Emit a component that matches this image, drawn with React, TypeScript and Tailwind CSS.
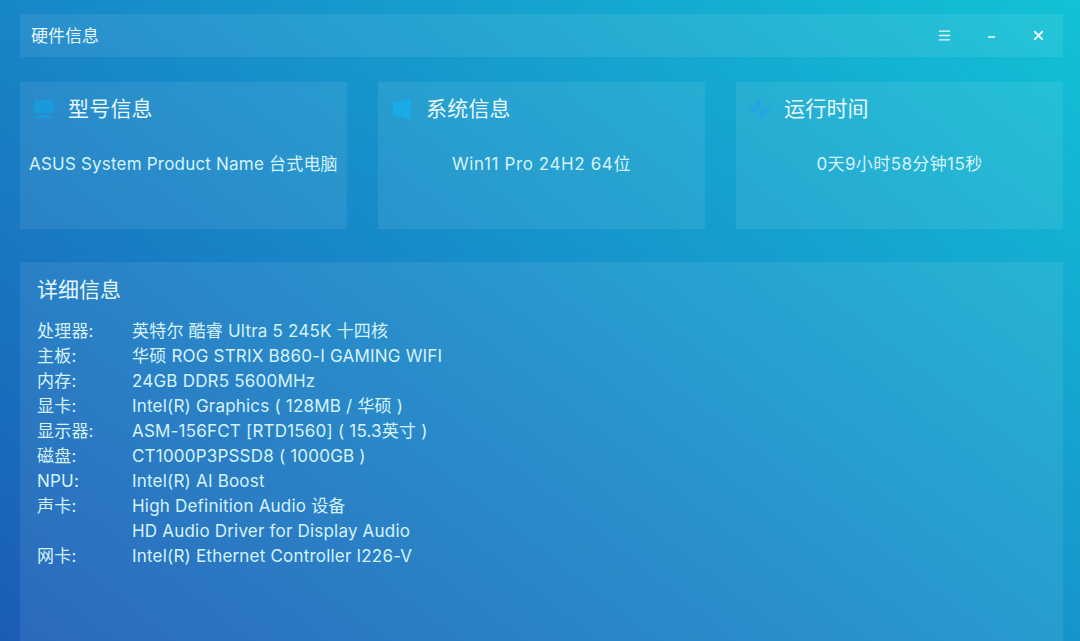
import React from 'react'
import { Menu, X } from 'lucide-react'

const font = "font-['Inter','Noto_Sans_CJK_SC',sans-serif]"

const rows = [
    ['处理器:', '英特尔 酷睿 Ultra 5 245K 十四核'],
    ['主板:', '华硕 ROG STRIX B860-I GAMING WIFI'],
    ['内存:', '24GB DDR5 5600MHz'],
    ['显卡:', 'Intel(R) Graphics ( 128MB / 华硕 )'],
    ['显示器:', 'ASM-156FCT [RTD1560] ( 15.3英寸 )'],
    ['磁盘:', 'CT1000P3PSSD8 ( 1000GB )'],
    ['NPU:', 'Intel(R) AI Boost'],
    ['声卡:', 'High Definition Audio 设备'],
    ['', 'HD Audio Driver for Display Audio'],
    ['网卡:', 'Intel(R) Ethernet Controller I226-V'],
]

function MonitorIcon() {
    return (
        <svg width="22" height="22" viewBox="0 0 22 22" fill="#1a9adc" className="blur-[0.5px]">
            <path d="M3 2h16a2 2 0 0 1 2 2v9a2 2 0 0 1-2 2H3a2 2 0 0 1-2-2V4a2 2 0 0 1 2-2z" />
            <path d="M6 17h10l2 3H4z" />
        </svg>
    )
}

function WindowsIcon() {
    return (
        <svg width="20" height="22" viewBox="0 0 20 22" fill="#18ade8" className="blur-[0.5px]">
            <path d="M1 4.500l7.500-1.500V10.500H1zM9 2.800L19 1v9.500H9zM1 11h7.500v7.500L1 17zM9 11h10v10L9 19.200z" />
        </svg>
    )
}

function PulseIcon() {
    return (
        <svg width="22" height="22" viewBox="0 0 22 22" fill="none" stroke="#26a3e2" strokeWidth="3" className="blur-[0.5px]">
            <path d="M0 12h6l3-9 4 16 3-7h5" />
        </svg>
    )
}

function InfoCard({ icon, title, value, spacing }: { icon: React.ReactNode; title: string; value: React.ReactNode; spacing?: string }) {
    return (
        <div className="h-[147px] w-[327px] bg-white/[0.08] px-[9px]">
            <div className="flex h-[54px] items-center gap-[13px] pl-[4px]">
                <div className="flex w-[22px] justify-center">{icon}</div>
                <span className="text-[21px] tracking-[0.2px] text-[#e6f8fd]">{title}</span>
            </div>
            <div className={`mt-[14px] whitespace-nowrap text-[17px] leading-[28px] text-[#d5f3fb] ${spacing}`}>{value}</div>
        </div>
    )
}

export default function App() {
    return (
        <div className={`${font} flex h-[641px] w-[1080px] flex-col overflow-hidden bg-[linear-gradient(38deg,#1a5cb6_0%,#1788c8_45%,#12c2d6_100%)] pb-0 pl-5 pr-[17px] pt-[14px]`}>
            <div className="flex h-[43px] shrink-0 items-center justify-between bg-white/[0.08] pl-[11px] pr-[17px]">
                <span className="pt-[2px] text-[17px] text-[#e6f8fd]">硬件信息</span>
                <div className="flex items-center text-[#e8f9fd]">
                    <Menu size={15} strokeWidth={2.250} />
                    <div className="ml-[36px] mt-[3px] h-[2px] w-[7px] bg-[#e8f9fd]/80" />
                    <X size={15} strokeWidth={3} className="ml-[36px]" />
                </div>
            </div>

            <div className="mt-[25px] flex shrink-0 justify-between">
                <InfoCard icon={<MonitorIcon />} title="型号信息" value="ASUS System Product Name 台式电脑" spacing="tracking-[0.2px]" />
                <InfoCard icon={<WindowsIcon />} title="系统信息" value="Win11 Pro 24H2 64位" spacing="text-center tracking-[0.6px]" />
                <InfoCard icon={<PulseIcon />} title="运行时间" value="0天9小时58分钟15秒" spacing="text-center tracking-[0.4px]" />
            </div>

            <div className="mt-[33px] flex-1 bg-white/[0.08] pl-[17px] pt-[14px]">
                <div className="text-[21px] leading-[28px] text-[#e6f8fd]">详细信息</div>
                <div className="mt-[15px] flex flex-col">
                    {rows.map((row, i) => (
                        <div key={i} className="flex h-[25px] items-center text-[17px] tracking-[0.2px] text-[#d5f3fb]">
                            <span className="w-[95px] shrink-0">{row[0]}</span>
                            <span className="whitespace-nowrap">{row[1]}</span>
                        </div>
                    ))}
                </div>
            </div>
        </div>
    )
}
